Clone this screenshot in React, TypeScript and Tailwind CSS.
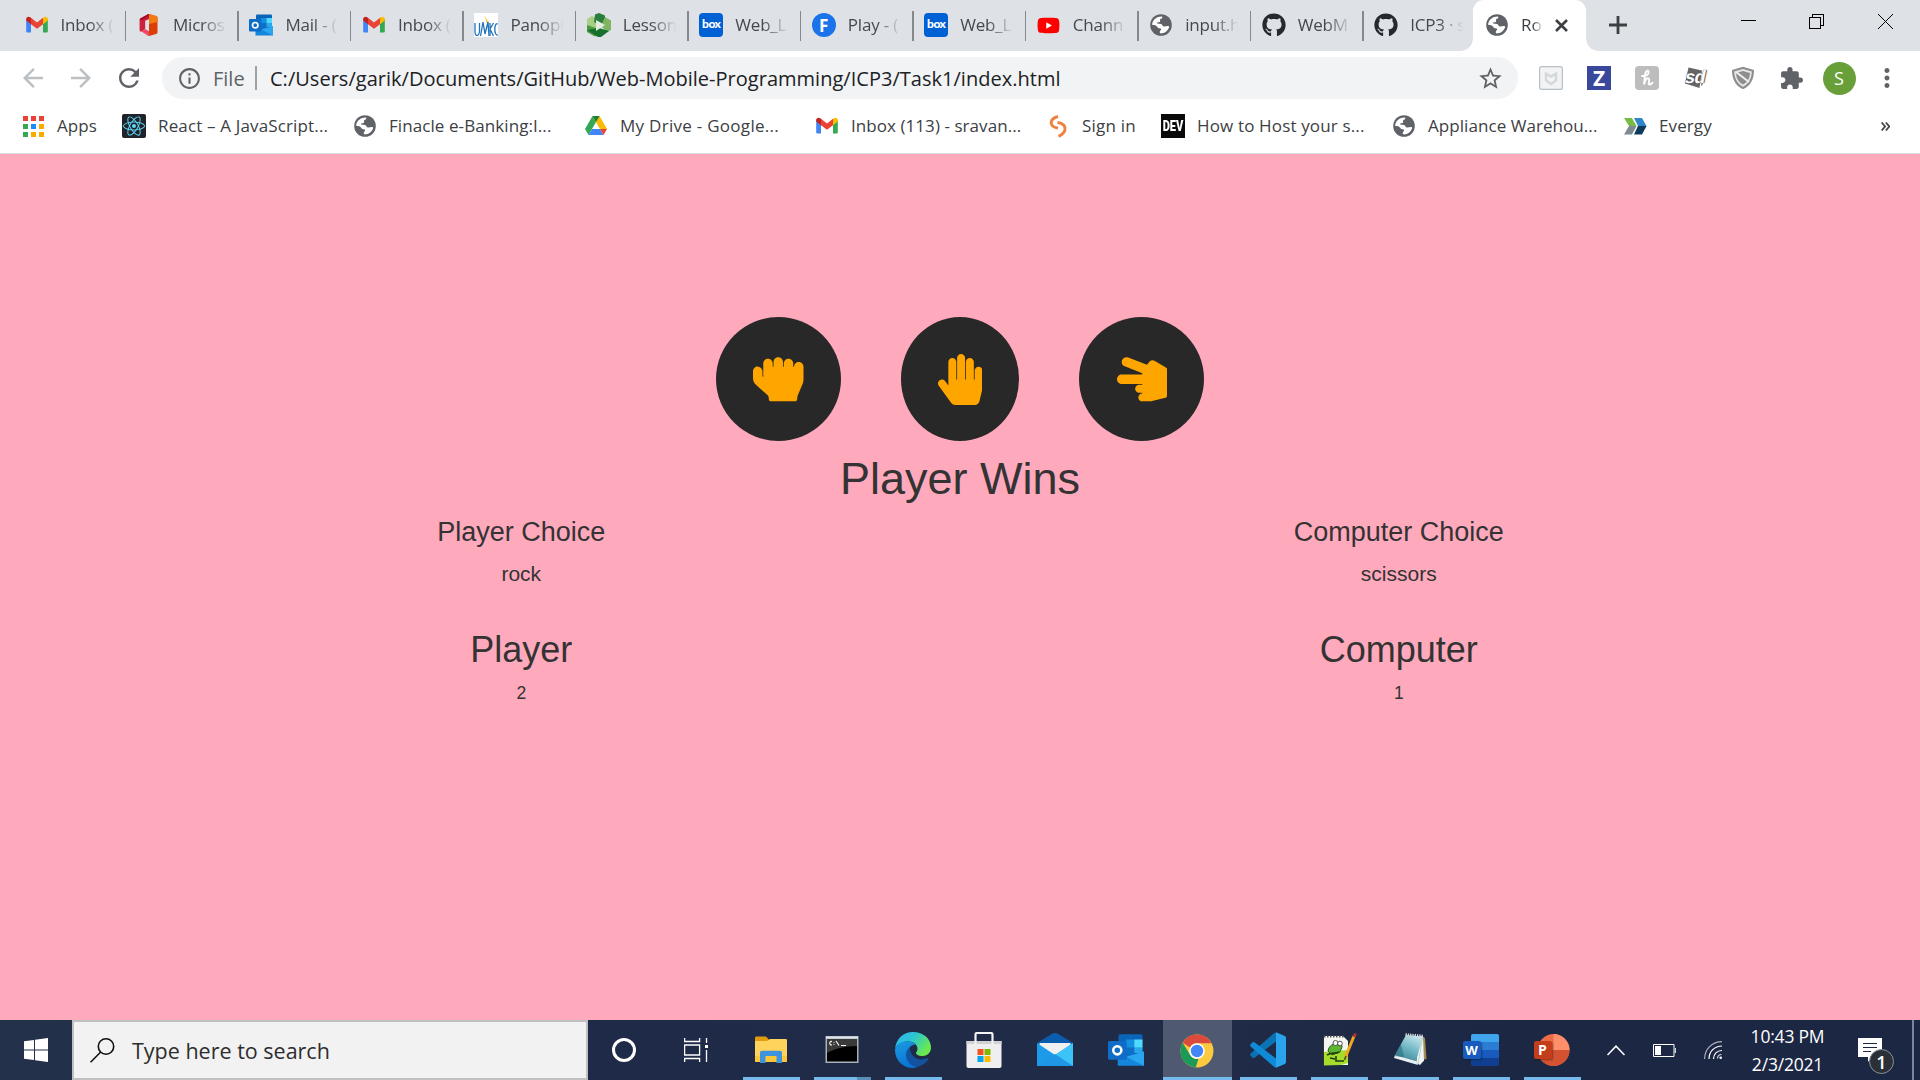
import React from "react";
import { FaGithub, FaHandPaper, FaHandRock, FaHandScissors, FaReact, FaYoutube } from "react-icons/fa";
import { MdArrowBack, MdArrowForward, MdExtension, MdInfoOutline, MdMoreVert, MdRefresh, MdStarBorder } from "react-icons/md";

const svg = "block shrink-0";

function Gmail() {
  return (
    <svg className={svg} width="24" height="24" viewBox="0 0 24 24">
      <path d="M1.2 5.8V18.2c0 .8.6 1.3 1.3 1.3H6V10.5z" fill="#4285f4" />
      <path d="M22.8 5.8V18.2c0 .8-.6 1.3-1.3 1.3H18V10.5z" fill="#34a853" />
      <path d="M6 4.8V11.2l6 4.5 6-4.5V4.8l-6 4.6z" fill="#ea4335" />
      <path d="M18 4.8v6.4l4.8-3.6V6c0-2-2.2-3-3.9-1.8z" fill="#fbbc04" />
      <path d="M6 4.8v6.4L1.2 7.6V6c0-2 2.2-3 3.9-1.8z" fill="#c5221f" />
    </svg>
  );
}

function Office() {
  return (
    <svg className={svg} width="24" height="24" viewBox="0 0 24 24">
      <path d="M2.600 7c0-.8.4-1.300 1-1.700L11 1.200c.5-.3 1-.2 1.500-.2v5L8.200 7.800v7.900l-3.500 2.700c-1 .5-2.100 0-2.100-1.200z" fill="#d0213c" />
      <path d="M2.600 7c0-.8.4-1.300 1-1.700L11 1.200c.5-.3 1-.2 1.500-.2v2L6 7z" fill="#a80f2c" />
      <path d="M4.500 18.400 8 16l4.500 2.600V23c-.5 0-1 0-1.500-.3z" fill="#ee4a68" />
      <path d="M12 1 19 3c1 .3 1.500.9 1.500 1.800v14.400c0 .9-.5 1.500-1.500 1.800l-7 2z" fill="#dc3e07" />
      <path d="M12 1 19 3c1 .3 1.500.9 1.500 1.800V9L12 11z" fill="#f27a10" />
    </svg>
  );
}

function Outlook({ size = 24 }: { size?: number }) {
  return (
    <svg className={svg} width={size} height={size} viewBox="0 0 24 24">
      <rect x="7" y="1.500" width="16" height="17" rx="1" fill="#0a64b8" />
      <path d="M12 5h5.500v5.500H12z" fill="#1490df" />
      <path d="M17.500 5H23v5.500h-5.500z" fill="#50d9ff" />
      <path d="M12 10.500h5.500V16H12z" fill="#0f6fc6" />
      <path d="M17.500 10.500H23V14h-5.500z" fill="#28a8ea" />
      <path d="M6.500 13.500 15 18l9-5v9.500H6.500z" fill="#1487dc" />
      <path d="M24 13v9.500L12 16.500z" fill="#2aa5ef" />
      <rect x="0" y="6" width="12.500" height="12.500" rx="1" fill="#0f6cc8" />
      <circle cx="6.200" cy="12.200" r="2.700" fill="none" stroke="#fff" strokeWidth="1.700" />
    </svg>
  );
}

function Umkc() {
  return (
    <svg className={svg} width="24" height="24" viewBox="0 0 24 24">
      <rect width="24" height="24" fill="#fff" />
      <path d="M10 2l5 8-1 3z" fill="#f7c91e" />
      <g fill="none" stroke="#2173bd" strokeWidth="1.300">
        <path d="M1 10v8c0 6 4 6 4.500 0v-8" />
        <path d="M6.500 23 9 9l2 12 3-12 1 14" />
        <path d="M16 10v13M19.500 10l-3.500 6 3.500 7" />
        <path d="M23.800 11c-4-2-4 12 0 11" />
      </g>
    </svg>
  );
}

function Panopto() {
  return (
    <svg className={svg} width="24" height="24" viewBox="0 0 24 24">
      <path d="M0 6 5 3l7 4v10L0 19z" fill="#a9cf86" />
      <path d="M8 1.500 12 0l6 2.500V9l-6 3-5-3z" fill="#2a7d3b" />
      <path d="M18 4l6 3.500V17l-4 2-6-6z" fill="#7fb562" />
      <path d="M0 12l9 3v8.500l-2-.5-7-4z" fill="#4f9a3f" />
      <path d="M0 17l12-2 10 3-8 6h-3z" fill="#14702c" />
      <path d="M9 7l9 5-9 6z" fill="#e2ecdf" />
    </svg>
  );
}

function BoxLogo() {
  return (
    <span className="flex h-6 w-6 shrink-0 items-center justify-center rounded-[4px] bg-[#0061d5] pb-[2px] font-['Lato'] text-[12px] leading-none font-black tracking-[-0.5px] text-white">
      box
    </span>
  );
}

function FLogo() {
  return (
    <span className="flex h-6 w-6 shrink-0 items-center justify-center rounded-full bg-[#1a73e8] font-['Open_Sans'] text-[17px] leading-none font-bold text-white">
      F
    </span>
  );
}

function Globe() {
  return (
    <svg className={svg} width="24" height="24" viewBox="0 0 24 24">
      <circle cx="12" cy="12" r="10.800" fill="#5f6368" />
      <path
        d="M3.300 10.200C4.500 6.300 8 3.500 12.300 3.500c1 0 1.300.7.800 1.400-.6.900-1.700.7-2 1.600-.3 1 .4 1.900-.5 2.500-.8.500-2.200 0-2.700.8-.3.900 1.300 1 2.600 1 1.900 0 2.700.8 3 1.800.3.800 1 1 2 1 1.300 0 2.200-.7 3.600-.5.900.1 1.200.5 1 1.100-1.200 3.500-4.500 6.200-8.300 6.200-.8 0-1-.4-1-1.200 0-1.300.9-1.500 1.200-2.400.3-.7-.3-1.300-1.200-1.500-1.400-.3-2.300-.8-2.900-1.900-.9-1.500-2.500-1.500-4.100-1.500-.8 0-.7-.9-.5-1.700z"
        fill="#fff"
      />
    </svg>
  );
}

function YouTube() {
  return (
    <span className="relative flex h-6 w-6 shrink-0 items-center justify-center">
      <span className="absolute h-2 w-2 bg-white" />
      <FaYoutube className="relative text-[23px] text-[#ff0000]" />
    </span>
  );
}

function Github() {
  return <FaGithub className="shrink-0 text-[24px] text-[#24292e]" />;
}

function Drive() {
  return (
    <svg className={svg} width="24" height="24" viewBox="0 0 24 24">
      <path d="M8.500 2 1 15l3.500 6L12 8z" fill="#34a853" />
      <path d="M15.500 2 23 15h-7L8.500 2z" fill="#fbbc04" />
      <path d="M15.500 2h-7L12 8.100z" fill="#188038" />
      <path d="M4.500 21 8 15h8l3.500 6z" fill="#4285f4" />
      <path d="M16 15h7l-3.500 6z" fill="#ea4335" />
    </svg>
  );
}

function AppsGrid() {
  const colors = ["#ea4335", "#ea4335", "#ea4335", "#34a853", "#1a8cff", "#f9ab00", "#34a853", "#f9ab00", "#f9ab00"];
  return (
    <span className="grid h-6 w-6 shrink-0 grid-cols-[5px_5px_5px] grid-rows-[5px_5px_5px] content-center justify-center gap-[3px]">
      {colors.map((c, i) => (
        <span key={i} style={{ backgroundColor: c }} />
      ))}
    </span>
  );
}

function ReactLogo() {
  return (
    <span className="flex h-6 w-6 shrink-0 items-center justify-center rounded-[2px] bg-[#20232a]">
      <FaReact className="text-[22px] text-[#61dafb]" />
    </span>
  );
}

function SignLogo() {
  return (
    <svg className={svg} width="24" height="24" viewBox="0 0 24 24" fill="none" stroke="#f0803c" strokeWidth="2.900">
      <path d="M12 2.500C7 3.500 4.200 7 5.500 10.200c.9 2.300 4 3.500 6.500 4" />
      <path d="M11.500 8.500c3.500.5 7 2 7.500 5.200.5 3.300-2 7-6.500 8.600" />
    </svg>
  );
}

function DevLogo() {
  return (
    <span className="flex h-6 w-6 shrink-0 items-center justify-center bg-[#0a0a0a] text-white">
      <span className="-mx-2 scale-x-[.74] font-['Roboto'] text-[15px] leading-none font-black">DEV</span>
    </span>
  );
}

function Evergy() {
  return (
    <svg className={svg} width="24" height="24" viewBox="0 0 24 24">
      <path d="M1 4h8l4.500 8H6z" fill="#76bc43" />
      <path d="M6 12h7.500L9 20.500H1z" fill="#7e8b93" />
      <path d="M11 4h8l4.500 8H15z" fill="#2f86c8" />
      <path d="M15 12h8.500L19 20.500h-8z" fill="#0b3a5b" />
    </svg>
  );
}

const tabs: { title: string; icon: React.ReactNode }[] = [
  { title: "Inbox (", icon: <Gmail /> },
  { title: "Micros", icon: <Office /> },
  { title: "Mail - (", icon: <Outlook /> },
  { title: "Inbox (", icon: <Gmail /> },
  { title: "Panopt", icon: <Umkc /> },
  { title: "Lesson", icon: <Panopto /> },
  { title: "Web_L", icon: <BoxLogo /> },
  { title: "Play - (", icon: <FLogo /> },
  { title: "Web_L", icon: <BoxLogo /> },
  { title: "Chann", icon: <YouTube /> },
  { title: "input.h", icon: <Globe /> },
  { title: "WebM", icon: <Github /> },
  { title: "ICP3 · s", icon: <Github /> },
];

function TabStrip() {
  return (
    <div className="flex h-[51px] bg-[#dee1e6] pl-[14px]">
      {tabs.map((t, i) => (
        <div key={i} className="flex w-[112.480px] shrink-0 items-center pb-px pl-[10.500px]">
          {t.icon}
          <span className="-mt-px ml-3 h-6 w-[56px] overflow-hidden text-[17px] leading-6 tracking-[-0.2px] whitespace-nowrap text-[#45494d] [mask-image:linear-gradient(to_right,black_50%,transparent_96%)]">
            {t.title}
          </span>
          {i < tabs.length - 1 && <span className="mt-px ml-auto h-[30px] w-[1.500px] bg-[#85888d]" />}
        </div>
      ))}
      <div className="relative -ml-[3px] flex w-[112.500px] shrink-0 items-center rounded-t-[11px] bg-white pb-px pl-3">
        <span className="absolute bottom-0 -left-3 h-3 w-3 bg-[radial-gradient(circle_at_0_0,transparent_11.500px,white_12px)]" />
        <span className="absolute -right-3 bottom-0 h-3 w-3 bg-[radial-gradient(circle_at_100%_0,transparent_11.500px,white_12px)]" />
        <Globe />
        <span className="-mt-px ml-3 h-6 w-[23px] text-[17px] leading-6 whitespace-nowrap text-[#3c4043] [mask-image:linear-gradient(to_right,black_50%,transparent_98%)]">
          Ro
        </span>
        <svg className="ml-[11px] block" width="13" height="13" viewBox="0 0 13 13" stroke="#3c4043" strokeWidth="2.600">
          <path d="M1 1l11 11M12 1L1 12" />
        </svg>
      </div>
      <svg className="mt-4 ml-[23px] block" width="18" height="18" viewBox="0 0 18 18" stroke="#3c4043" strokeWidth="2.800">
        <path d="M9 0v18M0 9h18" />
      </svg>
      <div className="mt-[14px] mr-[27px] ml-auto flex h-[15px]">
        <svg className="mr-[53px]" width="15" height="15" viewBox="0 0 15 15" shapeRendering="crispEdges">
          <path d="M0 6.500h15" stroke="#000" />
        </svg>
        <svg className="mr-[54px]" width="15" height="15" viewBox="0 0 15 15" fill="none" stroke="#000" shapeRendering="crispEdges">
          <path d="M.5 3.500h11v11H.5zM3.500 3.500v-3h11v11h-3" />
        </svg>
        <svg width="15" height="15" viewBox="0 0 15 15" stroke="#000">
          <path d="M0 0l15 15M15 0L0 15" />
        </svg>
      </div>
    </div>
  );
}

function Slot({ children }: { children: React.ReactNode }) {
  return <span className="flex w-12 shrink-0 items-center justify-center">{children}</span>;
}

function Toolbar() {
  return (
    <div className="flex h-[54px] items-center pl-[9px] text-[#5f6368]">
      <Slot>
        <MdArrowBack className="text-[30px] text-[#bdc0c3]" />
      </Slot>
      <Slot>
        <MdArrowForward className="text-[30px] text-[#bdc0c3]" />
      </Slot>
      <Slot>
        <MdRefresh className="text-[30px]" />
      </Slot>
      <div className="ml-[9px] flex h-[42px] w-[1356px] items-center rounded-full bg-[#f1f3f4] pr-[14px] pl-[15px]">
        <MdInfoOutline className="text-[25px]" />
        <span className="mt-px ml-[11px] w-[42px] text-[20px]">File</span>
        <span className="h-6 w-[2px] bg-[#9da1a5]" />
        <span className="mt-px ml-[13px] text-[20px] tracking-[0.02px] whitespace-nowrap text-[#202124]">
          C:/Users/garik/Documents/GitHub/Web-Mobile-Programming/ICP3/Task1/index.html
        </span>
        <MdStarBorder className="ml-auto text-[27px]" />
      </div>
      <div className="ml-[9px] flex">
        <Slot>
          <svg width="24" height="24" viewBox="0 0 24 24" fill="none">
            <rect x=".6" y=".6" width="22.800" height="22.800" rx="2" fill="#f1f3f4" stroke="#b7c0c6" strokeWidth="1.200" />
            <path d="M7 7.500v7l5 3.500 5-3.500v-7l-5 3z" stroke="#d3d8db" strokeWidth="2.400" />
          </svg>
        </Slot>
        <Slot>
          <span className="flex h-6 w-6 items-center justify-center bg-[#3a489c] font-['Open_Sans'] text-[21px] leading-none font-bold text-white">
            Z
          </span>
        </Slot>
        <Slot>
          <span className="flex h-6 w-6 items-center justify-center rounded-[4px] bg-[#bdbdbd]">
            <svg width="24" height="24" viewBox="0 0 24 24" fill="none" stroke="#fff" strokeWidth="1.900" strokeLinecap="round">
              <path d="M7 10c5 0 7-2 6.500-4.500C13 3.500 10.500 5 10 9L9 18.500c1-5 3-7 4.800-6 1.500 1-1 4.500.2 5.800 1.200.8 2.500-.3 3.500-1.600" />
            </svg>
          </span>
        </Slot>
        <Slot>
          <span className="relative flex h-6 w-6 items-center justify-center">
            <svg className="absolute" width="24" height="24" viewBox="0 0 24 24">
              <path d="M5.500 1.500 19 4.500l-2.500 17.500L2 17.500z" fill="#666" />
              <path d="M23 4.500l-4.500 15" stroke="#777" strokeWidth="1.300" />
            </svg>
            <span className="relative -skew-x-12 pb-[2px] font-['Liberation_Sans'] text-[18px] leading-none font-bold tracking-[-0.5px] text-white [text-shadow:0_0_1px_#444,1px_0_1px_#555]">
              sd
            </span>
          </span>
        </Slot>
        <Slot>
          <svg width="24" height="24" viewBox="0 0 24 24">
            <path d="M12 .8 23 4c0 9-3 15.500-11 19.300C4 19.500 1 13 1 4z" fill="#8e8e8e" />
            <path d="M12 3 20.800 5.500c-.2 7-2.800 12-8.800 15.300C6 17.500 3.400 12.500 3.200 5.500z" fill="#e6e6e6" />
            <path d="M12 5l7 2c-.3 5.500-2.500 9-7 11.600C7.500 16 5.300 12.500 5 7z" fill="#8e8e8e" />
            <path d="M5 6l13 10" stroke="#eee" strokeWidth="2" />
          </svg>
        </Slot>
        <Slot>
          <MdExtension className="text-[25px]" />
        </Slot>
        <Slot>
          <span className="flex h-[33px] w-[33px] items-center justify-center rounded-full bg-[#689f38] text-[18px] text-white">S</span>
        </Slot>
        <Slot>
          <MdMoreVert className="text-[30px]" />
        </Slot>
      </div>
    </div>
  );
}

const bookmarks: { title: string; icon: React.ReactNode; width: string; track: string }[] = [
  { title: "Apps", icon: <AppsGrid />, width: "w-[101px]", track: "tracking-[0.1px]" },
  { title: "React – A JavaScript...", icon: <ReactLogo />, width: "w-[231px]", track: "tracking-[0.15px]" },
  { title: "Finacle e-Banking:I...", icon: <Globe />, width: "w-[231px]", track: "tracking-[0.08px]" },
  { title: "My Drive - Google...", icon: <Drive />, width: "w-[231px]", track: "tracking-[0.28px]" },
  { title: "Inbox (113) - sravan...", icon: <Gmail />, width: "w-[231px]", track: "tracking-[0.06px]" },
  { title: "Sign in", icon: <SignLogo />, width: "w-[115px]", track: "tracking-[0.2px]" },
  { title: "How to Host your s...", icon: <DevLogo />, width: "w-[231px]", track: "tracking-[0.15px]" },
  { title: "Appliance Warehou...", icon: <Globe />, width: "w-[231px]", track: "tracking-[0.06px]" },
  { title: "Evergy", icon: <Evergy />, width: "w-[115px]", track: "tracking-[0.1px]" },
];

function Bookmarks() {
  return (
    <div className="flex h-[49px] items-center border-b border-[#dadce0] pr-[27px] pb-[6px] pl-[21px] text-[17px] text-[#3c4043]">
      {bookmarks.map((b) => (
        <div key={b.title} className={`flex shrink-0 items-center gap-3 ${b.width}`}>
          {b.icon}
          <span className={`whitespace-nowrap ${b.track}`}>{b.title}</span>
        </div>
      ))}
      <svg className="ml-auto mr-[3px]" width="9" height="9" viewBox="0 0 9 9" fill="none" stroke="#3c4043" strokeWidth="1.700">
        <path d="M.6.5l3.500 4-3.500 4M4.800.5l3.500 4-3.500 4" />
      </svg>
    </div>
  );
}

function Round({ children }: { children: React.ReactNode }) {
  return <div className="flex h-[124px] items-center rounded-[50%] bg-[#282828] px-[37px] text-[#ffa500]">{children}</div>;
}

function Column({ choice, value, name, score }: { choice: string; value: string; name: string; score: string }) {
  return (
    <div className="flex flex-col items-center">
      <div className="text-[27px] leading-[30px]">{choice}</div>
      <div className="mt-[12px] text-[21px] leading-[30px]">{value}</div>
      <div className="mt-[41px] text-[36px] leading-[40px]">{name}</div>
      <div className="mt-[11px] text-[17.500px] leading-[25px]">{score}</div>
    </div>
  );
}

function Game() {
  return (
    <main className="flex h-[866px] flex-col items-center bg-[#ffa9bd] pt-[163px] font-['Liberation_Sans',sans-serif] text-[#333]">
      <div className="flex gap-[60px]">
        <Round>
          <FaHandRock className="ml-[.5px] h-[50.500px] w-[50.500px]" />
        </Round>
        <Round>
          <FaHandPaper className="h-[51px] w-[44.600px]" />
        </Round>
        <Round>
          <FaHandScissors className="ml-[.5px] h-[50.500px] w-[50.500px]" />
        </Round>
      </div>
      <h1 className="mt-[13px] text-[45px] leading-[50px]">Player Wins</h1>
      <div className="mt-[13px] grid w-[1755px] grid-cols-2">
        <Column choice="Player Choice" value="rock" name="Player" score="2" />
        <Column choice="Computer Choice" value="scissors" name="Computer" score="1" />
      </div>
    </main>
  );
}

function Explorer() {
  return (
    <svg width="36" height="36" viewBox="0 0 36 36">
      <path d="M2 6c0-1 .5-1.500 1.500-1.500H13l3 3V12H2z" fill="#e09c0a" />
      <path d="M2 9h12l3-2h15.500c1 0 1.500.5 1.500 1.500V29c0 .7-.3 1-1 1H3c-.7 0-1-.3-1-1z" fill="#ffd35c" />
      <path d="M2 24h32v5c0 .7-.3 1-1 1H3c-.7 0-1-.3-1-1z" fill="#fcc63a" />
      <path d="M7 31V21c0-1.500.8-2.300 2.300-2.300h17.400c1.500 0 2.300.8 2.300 2.300v10h-5.500v-7h-11v7z" fill="#3d94dc" />
    </svg>
  );
}

function Cmd() {
  return (
    <svg width="36" height="36" viewBox="0 0 36 36">
      <rect x="1.500" y="4" width="33" height="27" fill="#a9b2ba" />
      <rect x="2" y="4.500" width="32" height="2" fill="#dfe5ea" />
      <rect x="3" y="7" width="30" height="22.500" fill="#000" />
      <path d="M3 7h30v7C20 14 10 17 3 21z" fill="#3a3a3a" />
      <path d="M8 9.500c-3-.8-3 4.200 0 3.400M10 10v.8M10 12.200v.8M12 9l3 4.500M17 13.500h5" stroke="#fff" strokeWidth="1.100" fill="none" />
    </svg>
  );
}

function Edge() {
  return (
    <svg width="36" height="36" viewBox="0 0 36 36">
      <defs>
        <linearGradient id="edgeTop" x1="0" y1="0" x2="1" y2=".5">
          <stop offset="0" stopColor="#2fb4f2" />
          <stop offset=".5" stopColor="#2cc5d2" />
          <stop offset="1" stopColor="#6bea4c" />
        </linearGradient>
        <linearGradient id="edgeLeft" x1="0" y1="0" x2=".4" y2="1">
          <stop offset="0" stopColor="#1b9de2" />
          <stop offset="1" stopColor="#0a74d3" />
        </linearGradient>
      </defs>
      <path
        d="M0 17C1 7 8 0 18 0c10.500 0 18 7 18 15.500 0 5-4 8.500-8.500 8.500-4 0-6.500-1.500-6.500-3 0-1 1.500-1.500 1.500-4.500 0-3.500-3.500-7-9-7C7 9.500 1.500 12 0 17z"
        fill="url(#edgeTop)"
      />
      <path
        d="M0 18C1 12 7 9 13 9.300c3.500.2 6 1.700 7.500 3.200-4 0-8.500 4-8.500 10 0 6 4.500 10.500 10 12.800-1.300.5-2.600.7-4 .7C8 36 0 28.500 0 18z"
        fill="url(#edgeLeft)"
      />
      <path
        d="M14.500 15.500C11 18.500 10 23 12 27.500c2 4.500 6 7.500 10.500 7.500 5-1.500 9-4.500 11-8 .4-.8-.3-1.300-1-1-8 3.500-16.500.5-18-10.500z"
        fill="#12529f"
      />
    </svg>
  );
}

function Store() {
  return (
    <svg width="36" height="36" viewBox="0 0 36 36">
      <path d="M.5 9h35v25c0 1.300-.7 2-2 2h-31c-1.300 0-2-.7-2-2z" fill="#efefef" />
      <path d="M.5 9h35v3H.5z" fill="#d2d2d2" />
      <path d="M9.500 12.500V2.500c0-1 .5-1.500 1.500-1.500h14c1 0 1.500.5 1.500 1.500v10" fill="none" stroke="#f4f4f4" strokeWidth="2.200" />
      <path d="M11.500 17h6v6h-6z" fill="#f25022" />
      <path d="M18.500 17h6v6h-6z" fill="#7fba00" />
      <path d="M11.500 24h6v6h-6z" fill="#00a4ef" />
      <path d="M18.500 24h6v6h-6z" fill="#ffb900" />
    </svg>
  );
}

function Mail() {
  return (
    <svg width="36" height="36" viewBox="0 0 36 36">
      <path d="M0 11 15.500 1.600c1.500-.9 3.500-.9 5 0L36 11v3H0z" fill="#0b5cad" />
      <path d="M2.500 11h31v12h-31z" fill="#f0f0f0" />
      <path d="M0 11l18 12L36 11v23H0z" fill="#1b9be8" />
      <path d="M36 11v23L13 20l5 3z" fill="#3cc3f7" />
      <path d="M0 34l18-12 18 12z" fill="#1f96e6" />
    </svg>
  );
}

function Chrome() {
  return (
    <svg className="mt-px" width="34" height="34" viewBox="0 0 34 34">
      <circle cx="17" cy="17" r="16.500" fill="#fbca3e" />
      <path d="M2.700 8.700A16.500 16.500 0 0 1 31.300 8.800L31.400 9.200H17a7.800 7.800 0 0 0-7 4.300z" fill="#dc4a3e" />
      <path d="M2.700 8.700 10.200 21a7.800 7.800 0 0 0 8.300 3.700L15.700 33.500A16.500 16.500 0 0 1 2.700 8.700z" fill="#1a9a58" />
      <circle cx="17" cy="17" r="7.800" fill="#fff" />
      <circle cx="17" cy="17" r="6.200" fill="#4285f4" />
    </svg>
  );
}

function VsCode() {
  return (
    <svg width="36" height="36" viewBox="0 0 36 36">
      <path
        d="M.5 23.500 2.600 25.700c.6.500 1.300.5 1.900 0L26 9.400V.5c-.8 0-1.500.2-2 .8L.6 21.400c-.7.600-.7 1.400-.1 2.100z"
        fill="#0a72b5"
      />
      <path
        d="M.5 12.500 2.600 10.300c.6-.5 1.300-.5 1.900 0L26 26.600V35.500c-.8 0-1.500-.2-2-.8L.6 14.600c-.7-.6-.7-1.400-.1-2.100z"
        fill="#0f8ad6"
      />
      <path d="M26 .2 34.800 4c.8.400 1.200 1 1.200 1.900v24.200c0 .9-.4 1.500-1.200 1.900L26 35.800z" fill="#2ba4ee" />
    </svg>
  );
}

function NotepadPlus() {
  return (
    <svg width="36" height="36" viewBox="0 0 36 36">
      <path d="M2 4h20l5 5v24H3z" fill="#f4f4f0" />
      <path d="M2.500 20 27 18v13l-7 2-17 .5z" fill="#a6dc2c" />
      <path d="M3 4.500h20" stroke="#555" strokeWidth="2" strokeDasharray="1.500 1.500" />
      <path d="M7 19c1-6 6-8 9-6l4-3 1 5-2 5-8 3z" fill="#5cb531" stroke="#2b5b17" />
      <circle cx="14.500" cy="11" r="2.500" fill="#fff" stroke="#333" strokeWidth=".8" />
      <circle cx="19" cy="11.500" r="2.300" fill="#fff" stroke="#333" strokeWidth=".8" />
      <path d="M6 23c4-3 9-1 12-3M9 26l5 1M15 24v5h8" stroke="#223b14" strokeWidth="1.600" fill="none" />
      <path d="M33 4 24.500 25" stroke="#f2a81d" strokeWidth="3" />
      <path d="M34.500 1.500 33 5" stroke="#b5342b" strokeWidth="3" />
      <path d="M25 24l-1.500 4" stroke="#59401b" strokeWidth="1.500" />
      <path d="M2.500 4v29.500" stroke="#333" />
    </svg>
  );
}

function Notepad() {
  return (
    <svg width="36" height="36" viewBox="0 0 36 36">
      <defs>
        <linearGradient id="padCover" x1=".7" y1="0" x2=".2" y2="1">
          <stop offset="0" stopColor="#c3e4ea" />
          <stop offset=".5" stopColor="#6fb6c4" />
          <stop offset="1" stopColor="#3b8393" />
        </linearGradient>
      </defs>
      <path d="M30 4l3 2 1.500 21-5 1z" fill="#a58b4d" />
      <path d="M28 4l3 .5 1 24-4 4.500-4-2z" fill="#eef3f3" />
      <path d="M14 3 31 4.500 24 29 3 23z" fill="url(#padCover)" />
      <path d="M3 23 24 29l2 4L2 26z" fill="#e4f0f1" />
      <path d="M2.500 24 9 12l3 12.500-2 .5z" fill="#256d7c" opacity=".55" />
      <path d="M30.500 6 26 32" stroke="#b9c9cc" strokeWidth=".8" />
      <path d="M13.500 2.500 31.500 4" stroke="#d9dcdc" strokeWidth="2.600" strokeDasharray="1.300 1" />
    </svg>
  );
}

function Badge({ letter, className }: { letter: string; className: string }) {
  return (
    <span
      className={`absolute top-[9px] left-0 flex h-[18px] w-[18px] items-center justify-center rounded-[2px] font-['Open_Sans'] leading-none font-bold text-white shadow-[1px_1px_2px_rgba(0,0,0,.35)] ${className}`}
    >
      {letter}
    </span>
  );
}

function Word() {
  return (
    <span className="relative h-9 w-9">
      <span className="mt-[2px] ml-2 grid h-8 w-7 grid-rows-4 overflow-hidden rounded-[2px]">
        <span className="bg-[#41a5ee]" />
        <span className="bg-[#2b7cd3]" />
        <span className="bg-[#185abd]" />
        <span className="bg-[#103f91]" />
      </span>
      <Badge letter="W" className="bg-[#185abd] text-[13px]" />
    </span>
  );
}

function PowerPoint() {
  return (
    <span className="relative h-9 w-9">
      <svg width="36" height="36" viewBox="0 0 36 36">
        <circle cx="19.500" cy="18" r="16" fill="#ed6c47" />
        <path d="M19.500 2a16 16 0 0 1 16 16h-16z" fill="#ff8f6b" />
        <path d="M35.500 18a16 16 0 0 1-32 0z" fill="#d35230" />
      </svg>
      <Badge letter="P" className="bg-[#c43e1c] text-[14px]" />
    </span>
  );
}

const apps: { icon: React.ReactNode; state: "none" | "open" | "multi" | "active" }[] = [
  { icon: <Explorer />, state: "open" },
  { icon: <Cmd />, state: "multi" },
  { icon: <Edge />, state: "open" },
  { icon: <Store />, state: "none" },
  { icon: <Mail />, state: "none" },
  { icon: <Outlook size={36} />, state: "none" },
  { icon: <Chrome />, state: "active" },
  { icon: <VsCode />, state: "open" },
  { icon: <NotepadPlus />, state: "open" },
  { icon: <Notepad />, state: "open" },
  { icon: <Word />, state: "open" },
  { icon: <PowerPoint />, state: "open" },
];

function Taskbar() {
  return (
    <footer className="flex h-[60px] bg-[linear-gradient(to_right,#23314a_0,#1e2a47_600px,#202c47_1200px,#1c2744_1500px,#1c2744)] text-white">
      <div className="flex w-[72px] items-center justify-center">
        <svg width="24" height="24" viewBox="0 0 24 24" fill="#fff">
          <path d="M0 3.300 10 2v9.500H0zM11 1.800 24 0v11.500H11zM0 12.500h10V22L0 20.700zM11 12.500h13V24l-13-1.800z" />
        </svg>
      </div>
      <div className="flex w-[516px] items-center border-2 border-[#c0c0c0] bg-[#f2f2f2] pl-4 text-[#2d2d2d]">
        <svg width="25" height="25" viewBox="0 0 25 25" fill="none" stroke="#111" strokeWidth="1.600">
          <circle cx="16" cy="8.500" r="7.700" />
          <path d="M10.700 14 .5 24.300" />
        </svg>
        <span className="mt-[3px] ml-[17px] text-[21.500px]">Type here to search</span>
      </div>
      <div className="flex w-[72px] items-center justify-center">
        <span className="h-6 w-6 rounded-full border-[3px] border-white" />
      </div>
      <div className="flex w-[76px] items-center pl-6">
        <svg width="24" height="24" viewBox="0 0 24 24" fill="none" stroke="#fff" strokeWidth="1.300">
          <path d="M.6 0v3.500h15V0M.6 7h15v10H.6zM.6 24v-3.500h15V24M22.500 0v5M22.500 12v12" />
          <path d="M21 7h3v3h-3z" fill="#fff" stroke="none" />
        </svg>
      </div>
      {apps.map((a, i) => (
        <div key={i} className="relative flex w-[71px] shrink-0 items-center justify-center pr-[2px]">
          {a.state === "active" && <span className="absolute inset-y-0 right-px left-px bg-[#4f5a70]" />}
          {a.state === "active" && <span className="absolute right-px bottom-0 left-px h-[3px] bg-[#76b9ed]" />}
          {a.state === "open" && <span className="absolute bottom-0 left-[7px] h-[3px] w-[57px] bg-[#76b9ed]" />}
          {a.state === "multi" && (
            <span className="absolute bottom-0 left-[7px] flex h-[3px] w-[57px] bg-[#5b8db5]">
              <span className="w-[43px] bg-[#76b9ed]" />
            </span>
          )}
          <span className="relative flex">{a.icon}</span>
        </div>
      ))}
      <div className="flex flex-1 items-center">
        <svg className="ml-[19px]" width="18" height="11" viewBox="0 0 18 11" fill="none" stroke="#fff" strokeWidth="1.500">
          <path d="M.5 10 9 1.200 17.500 10" />
        </svg>
        <svg className="ml-7" width="23" height="13" viewBox="0 0 23 13" fill="none" stroke="#fff">
          <path d="M.5.5h20.500v12H.5zM22.300 4v5" />
          <path d="M2 2h6v9H2z" fill="#fff" stroke="none" />
        </svg>
        <svg className="ml-7" width="18" height="18" viewBox="0 0 18 18" fill="none" stroke="#fff" strokeWidth="1.200">
          <path d="M.6 18C.6 8 8 .6 18 .6" opacity=".65" />
          <path d="M5 18C5 10.500 10.500 5 18 5" />
          <path d="M9.500 18c0-5 3.500-8.500 8.500-8.500" />
          <path d="M13.500 17.500c0-2.200 1.500-4 4-4" opacity=".8" />
          <circle cx="16.700" cy="16.700" r="1.300" fill="#fff" stroke="none" />
        </svg>
        <div className="ml-[27px] flex w-[77px] flex-col items-center text-[17.500px] leading-7 tracking-[-0.2px] whitespace-nowrap">
          <span>10:43 PM</span>
          <span>2/3/2021</span>
        </div>
        <div className="relative ml-8 h-9 w-9">
          <svg className="block" width="36" height="36" viewBox="0 0 36 36">
            <path d="M0 6h24v19H14l-4 5v-5H0z" fill="#fff" />
            <path d="M5 11.500h14M5 15.500h14M5 19.500h8" stroke="#1c2744" strokeWidth="1.200" />
          </svg>
          <span className="absolute top-[17px] left-[11px] flex h-[25px] w-[25px] items-center justify-center rounded-full border border-[#8b8f98] bg-[#2b2f38] text-[18px] leading-none font-semibold">
            1
          </span>
        </div>
        <span className="mr-[6px] ml-auto h-full w-[2px] bg-[#7e849a]" />
      </div>
    </footer>
  );
}

export default function App() {
  return (
    <div className="flex h-[1080px] w-[1920px] flex-col overflow-hidden bg-white font-['Open_Sans',sans-serif]">
      <TabStrip />
      <Toolbar />
      <Bookmarks />
      <Game />
      <Taskbar />
    </div>
  );
}
